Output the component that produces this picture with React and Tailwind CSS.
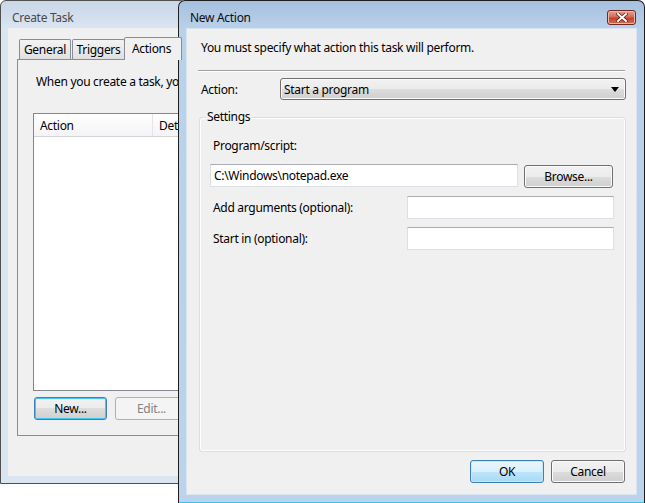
import React from 'react';

const font = "font-['Noto_Sans','Open_Sans',sans-serif] text-[12px] leading-[15px] tracking-[-0.3px]";

const grayBtn =
    "h-[23px] rounded-[3px] border border-[#707070] bg-[linear-gradient(#f2f2f2_0%,#ebebeb_50%,#dddddd_50%,#cfcfcf_100%)] shadow-[inset_0_0_0_1px_#fbfbfb] text-black flex items-center justify-center";

const textBox = "h-[23px] bg-white border border-[#dbdfe6] border-t-[#abadb3] px-[3px] flex items-center";

const CloseButton = () => (
    <div className="mt-[9px] w-[29px] h-[15px] rounded-[3px] border border-[#6b2a22] bg-[linear-gradient(#e8a393_0%,#d36b59_45%,#c0432d_55%,#d86b52_100%)] shadow-[inset_0_0_0_1px_#f0b8a8] flex items-center justify-center">
        <svg width="12" height="9" viewBox="0 0 12 9">
            <path d="M2 1 L10 8 M10 1 L2 8" stroke="#5a1a12" strokeWidth="3.4" strokeLinecap="square" />
            <path d="M2 1 L10 8 M10 1 L2 8" stroke="#ffffff" strokeWidth="2" strokeLinecap="square" />
        </svg>
    </div>
);

// back window, mostly hidden under the dialog
const CreateTaskWindow = () => (
    <div className="absolute left-0 top-0 w-[186px] h-[484px] overflow-hidden border border-[#505050] rounded-t-[6px] bg-[linear-gradient(#c9d7e7_0px,#dbe5f2_28px,#dbe5f2_100%)] flex flex-col">
        <div className="h-[27px] pl-[11px] pt-[9px] text-[#4a4a4a] whitespace-nowrap">Create Task</div>
        <div className="ml-[7px] w-[400px] h-[448px] bg-[#f0f0f0] flex flex-col">
            <div className="ml-[9px] mt-[9px] h-[22px] flex items-end">
                <div className="ml-[2px] w-[52px] h-[20px] border border-b-0 border-[#898c95] rounded-t-[2px] bg-[linear-gradient(#f3f3f3,#e0e0e0)] flex items-center justify-center">General</div>
                <div className="ml-[1px] w-[53px] h-[20px] border border-b-0 border-[#898c95] rounded-t-[2px] bg-[linear-gradient(#f3f3f3,#e0e0e0)] flex items-center justify-center">Triggers</div>
                <div className="-ml-[1px] w-[58px] h-[23px] -mb-[1px] border border-b-0 border-[#898c95] rounded-t-[2px] bg-[#f0f0f0] relative z-10 pl-[7px] pt-[3px]">Actions</div>
            </div>
            <div className="ml-[9px] h-[377px] border border-[#898c95] bg-[#f0f0f0] flex flex-col">
                <div className="ml-[18px] mt-[14px] w-[142px] overflow-hidden whitespace-nowrap">When you create a task, yo</div>
                <div className="ml-[15px] mt-[24px] h-[278px] w-[380px] border border-[#828790] bg-white">
                    <div className="h-[23px] border-b border-[#d5d5d5] bg-[linear-gradient(#ffffff,#f3f4f6)] flex items-center">
                        <div className="w-[119px] h-full pl-[6px] border-r border-[#e3e5e8] flex items-center">Action</div>
                        <div className="pl-[6px]">Det</div>
                    </div>
                </div>
                <div className="ml-[16px] mt-[6px] flex gap-[8px]">
                    <div className="w-[73px] h-[23px] rounded-[3px] border border-[#3c7fb1] bg-[linear-gradient(#f2f2f2_0%,#ebebeb_50%,#dddddd_50%,#cfcfcf_100%)] shadow-[inset_0_0_0_1px_#48c6f3] flex items-center justify-center">New...</div>
                    <div className="w-[73px] h-[23px] rounded-[3px] border border-[#adb2b5] bg-[#f4f4f4] text-[#838383] flex items-center justify-center">Edit...</div>
                </div>
            </div>
        </div>
    </div>
);

const NewActionWindow = () => (
    <div className="absolute left-[178px] top-0 w-[467px] h-[503px] border border-[#1f1f1f] border-b-0 rounded-t-[7px] bg-[linear-gradient(#a6c0de_0px,#bad1ea_28px,#bcd3ec_100%)] flex flex-col">
        <div className="h-[27px] pl-[11px] pr-[8px] flex items-start justify-between text-[#0d0d0d]">
            <span className="pt-[9px]">New Action</span>
            <CloseButton />
        </div>
        <div className="ml-[7px] w-[451px] h-[467px] bg-[#f0f0f0] border border-[#d9e4f1] flex flex-col">
            <div className="pl-[14px] pt-[11px]">You must specify what action this task will perform.</div>
            <div className="ml-[11px] mt-[15px] w-[427px] h-[2px] border-t border-[#a0a0a0] border-b border-b-white" />
            <div className="mt-[6px] flex items-center">
                <span className="ml-[14px] w-[79px]">Action:</span>
                <div className="w-[346px] h-[22px] rounded-[3px] border border-[#707070] bg-[linear-gradient(#f2f2f2_0%,#ebebeb_50%,#dddddd_50%,#cfcfcf_100%)] shadow-[inset_0_0_0_1px_#fbfbfb] flex items-center justify-between pl-[3px] pr-[6px]">
                    <span>Start a program</span>
                    <svg width="8" height="5" viewBox="0 0 8 5">
                        <path d="M0 0 H8 L4 5 Z" fill="#000" />
                    </svg>
                </div>
            </div>
            <div className="relative ml-[12px] mt-[17px] w-[427px] h-[335px] rounded-[3px] border border-[#d5dfe5] shadow-[inset_0_0_0_1px_#ffffff] flex flex-col">
                <span className="absolute left-[6px] -top-[9px] px-[1px] bg-[#f0f0f0]">Settings</span>
                <div className="pl-[13px] pt-[20px]">Program/script:</div>
                <div className="mt-[11px] pl-[10px] flex items-start gap-[6px]">
                    <div className={`${textBox} w-[308px]`}>C:\Windows\notepad.exe</div>
                    <div className={`${grayBtn} mt-[1px] w-[89px]`}>Browse...</div>
                </div>
                <div className="mt-[8px] flex items-center">
                    <div className="pl-[13px] w-[207px]">Add arguments (optional):</div>
                    <div className={`${textBox} w-[207px]`} />
                </div>
                <div className="mt-[8px] flex items-center">
                    <div className="pl-[13px] w-[207px]">Start in (optional):</div>
                    <div className={`${textBox} w-[207px]`} />
                </div>
            </div>
            <div className="mt-[8px] pr-[11px] flex justify-end gap-[7px]">
                <div className="w-[74px] h-[23px] rounded-[3px] border border-[#3c7fb1] bg-[linear-gradient(#eaf6fd_0%,#d9f0fc_50%,#bee6fd_50%,#a7d9f5_100%)] shadow-[inset_0_0_0_1px_#c4e9fc] flex items-center justify-center">OK</div>
                <div className={`${grayBtn} w-[74px]`}>Cancel</div>
            </div>
        </div>
        <div className="mt-auto h-[1px] bg-[#3fc6ee]" />
    </div>
);

export default function App() {
    return (
        <div className={`relative w-[645px] h-[503px] bg-white overflow-hidden ${font}`}>
            <CreateTaskWindow />
            <NewActionWindow />
        </div>
    );
}
